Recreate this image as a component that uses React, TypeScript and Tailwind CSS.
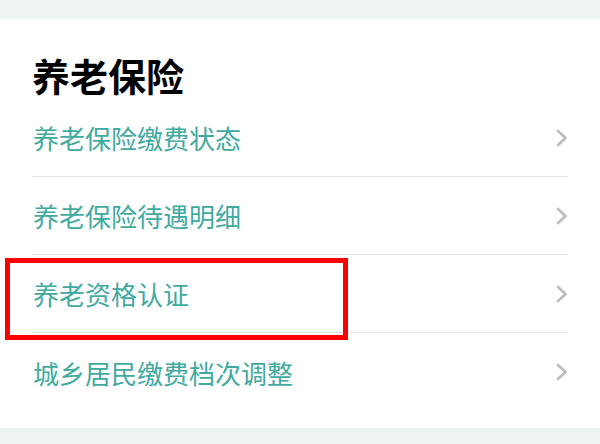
import React from "react";

const items = [
  "养老保险缴费状态",
  "养老保险待遇明细",
  "养老资格认证",
  "城乡居民缴费档次调整",
];

function Chevron() {
  return (
    <svg width="12" height="18" viewBox="0 0 12 18" fill="none">
      <polyline
        points="2,2 9.5,9 2,16"
        stroke="#bdbdbd"
        strokeWidth="2.6"
        strokeLinecap="round"
        strokeLinejoin="round"
      />
    </svg>
  );
}

export default function App() {
  return (
    <div
      className="w-[600px] h-[444px] bg-[#eef4f3] pt-[19px] overflow-hidden"
      style={{ fontFamily: '"Noto Sans CJK SC", "Noto Sans", sans-serif' }}
    >
      <div className="bg-white h-[409px] px-[32px]">
        <h1 className="pt-[36px] pb-[4px] text-[38px] leading-[40px] font-bold text-black">
          养老保险
        </h1>
        <ul>
          {items.map((label, i) => (
            <li
              key={label}
              className={
                "relative h-[78px] flex items-center justify-between " +
                (i < items.length - 1 ? "border-b border-[#e6e6e6]" : "")
              }
            >
              <span className="text-[26px] text-[#3faaa0] pl-[1px]">{label}</span>
              <Chevron />
              {i === 2 && (
                <div className="absolute left-[-27px] top-[3px] w-[343px] h-[82px] border-[5px] border-[#ff0000]" />
              )}
            </li>
          ))}
        </ul>
      </div>
    </div>
  );
}
